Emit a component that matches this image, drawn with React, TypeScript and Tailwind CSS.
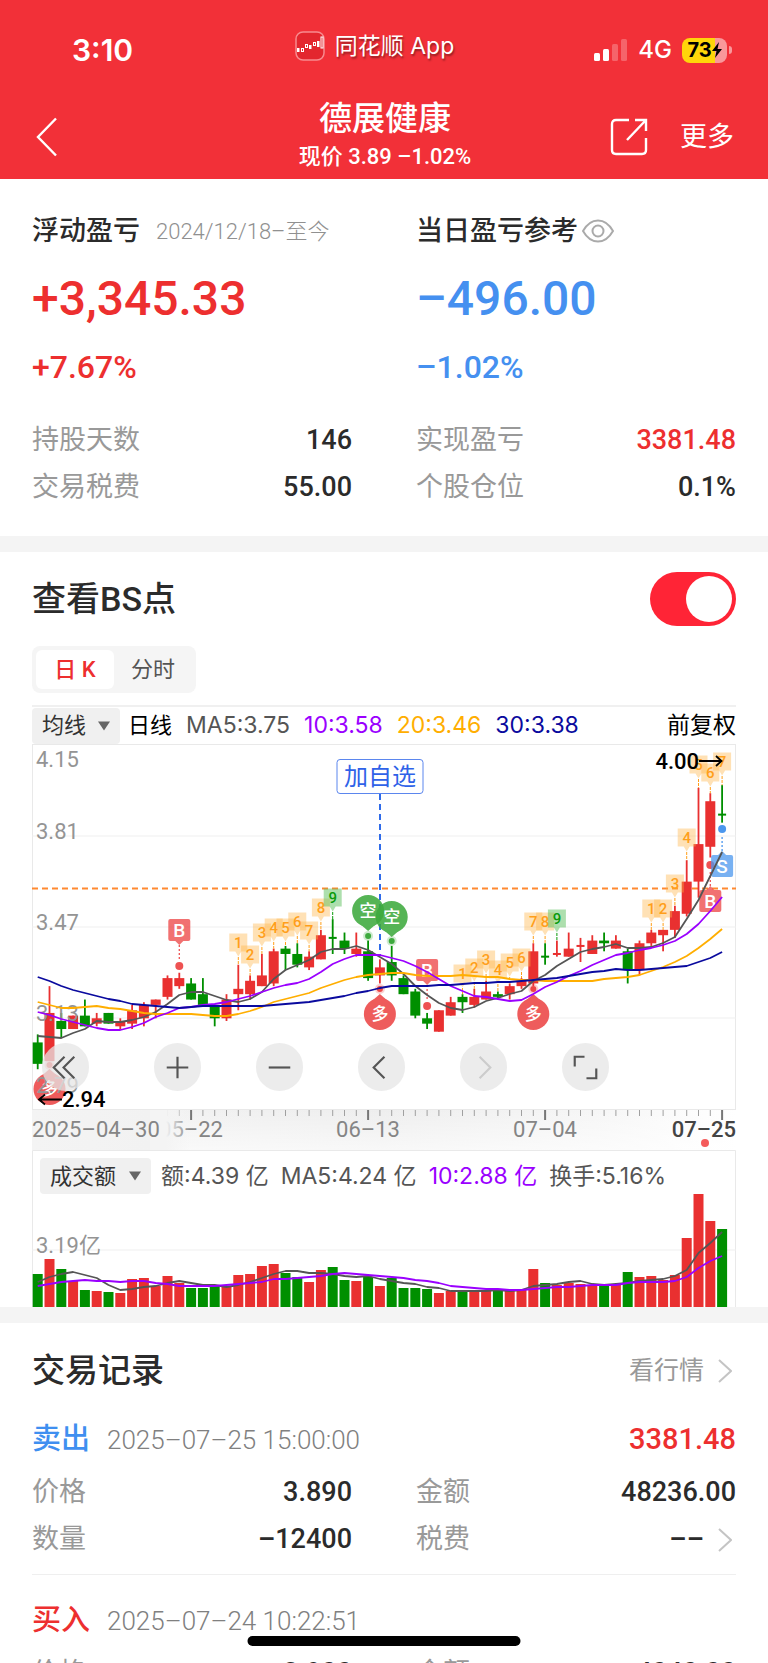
import React, { useState } from 'react';

type Candle = [dir: 'r' | 'g', high: number, top: number, bottom: number, low: number, vol: number];

const RED = '#e93030';
const GREEN = '#008f00';
const STEP = 11.8;

const candles: Candle[] = [
  ['g', 3.07, 3.04, 2.96, 2.94, 33],
  ['r', 3.25, 3.15, 2.97, 2.97, 48],
  ['g', 3.15, 3.12, 3.09, 3.06, 38],
  ['r', 3.14, 3.14, 3.09, 3.09, 26],
  ['g', 3.2, 3.14, 3.1, 3.1, 17],
  ['r', 3.15, 3.13, 3.11, 3.1, 16],
  ['g', 3.15, 3.15, 3.11, 3.11, 15],
  ['r', 3.13, 3.12, 3.1, 3.09, 14],
  ['r', 3.18, 3.16, 3.11, 3.09, 28],
  ['r', 3.19, 3.18, 3.13, 3.1, 29],
  ['r', 3.2, 3.2, 3.18, 3.13, 21],
  ['r', 3.29, 3.28, 3.21, 3.2, 31],
  ['r', 3.3, 3.28, 3.25, 3.24, 24],
  ['g', 3.28, 3.26, 3.2, 3.2, 19],
  ['g', 3.28, 3.22, 3.18, 3.18, 19],
  ['g', 3.18, 3.18, 3.13, 3.1, 21],
  ['r', 3.22, 3.2, 3.13, 3.12, 21],
  ['r', 3.33, 3.24, 3.22, 3.16, 32],
  ['r', 3.29, 3.27, 3.22, 3.2, 33],
  ['r', 3.37, 3.29, 3.25, 3.25, 41],
  ['r', 3.39, 3.38, 3.26, 3.25, 43],
  ['g', 3.4, 3.39, 3.37, 3.31, 34],
  ['g', 3.41, 3.37, 3.33, 3.32, 30],
  ['r', 3.38, 3.36, 3.32, 3.31, 25],
  ['r', 3.46, 3.44, 3.35, 3.35, 37],
  ['g', 3.5, 3.43, 3.43, 3.37, 40],
  ['g', 3.45, 3.42, 3.39, 3.37, 27],
  ['r', 3.45, 3.39, 3.37, 3.36, 26],
  ['g', 3.42, 3.38, 3.28, 3.27, 30],
  ['r', 3.35, 3.32, 3.29, 3.26, 21],
  ['g', 3.4, 3.34, 3.29, 3.27, 29],
  ['g', 3.29, 3.28, 3.22, 3.22, 19],
  ['g', 3.24, 3.23, 3.14, 3.13, 19],
  ['g', 3.15, 3.13, 3.11, 3.09, 18],
  ['r', 3.16, 3.16, 3.08, 3.08, 14],
  ['r', 3.21, 3.19, 3.14, 3.14, 16],
  ['g', 3.22, 3.21, 3.19, 3.15, 17],
  ['r', 3.24, 3.21, 3.18, 3.17, 17],
  ['r', 3.27, 3.23, 3.2, 3.2, 17],
  ['g', 3.23, 3.22, 3.21, 3.2, 16],
  ['r', 3.26, 3.25, 3.22, 3.2, 16],
  ['r', 3.28, 3.27, 3.25, 3.24, 18],
  ['r', 3.41, 3.38, 3.26, 3.25, 38],
  ['g', 3.41, 3.36, 3.36, 3.33, 24],
  ['r', 3.42, 3.37, 3.37, 3.36, 22],
  ['r', 3.45, 3.39, 3.36, 3.36, 24],
  ['r', 3.43, 3.4, 3.4, 3.34, 23],
  ['r', 3.44, 3.42, 3.37, 3.37, 21],
  ['g', 3.45, 3.42, 3.41, 3.38, 22],
  ['r', 3.44, 3.42, 3.39, 3.39, 22],
  ['g', 3.39, 3.38, 3.31, 3.26, 35],
  ['r', 3.42, 3.41, 3.31, 3.29, 30],
  ['r', 3.46, 3.45, 3.41, 3.4, 31],
  ['r', 3.46, 3.46, 3.44, 3.38, 27],
  ['r', 3.55, 3.53, 3.46, 3.43, 32],
  ['r', 3.72, 3.64, 3.52, 3.51, 69],
  ['r', 3.99, 3.78, 3.64, 3.58, 113],
  ['r', 3.97, 3.94, 3.77, 3.73, 86],
  ['g', 4.0, 3.89, 3.89, 3.86, 78],
];

const priceLines = [
  { color: '#555555', ys: [292,293,294,289,285,277,278,278,276,273,268,260,251,248,248,252,256,258,255,248,235,226,221,216,208,205,205,202,206,213,220,230,242,251,259,264,266,263,257,254,250,247,237,231,222,215,208,205,203,200,204,204,203,199,193,175,156,132,108] },
  { color: '#ffae00', ys: [258,261,264,264,263,262,264,265,267,269,270,270,270,270,271,272,272,270,267,263,258,255,252,249,244,240,236,233,231,230,229,229,231,232,232,232,231,232,233,233,235,236,236,237,237,237,237,237,235,234,233,231,227,223,218,212,204,195,185] },
  { color: '#9a00ff', ys: [268,271,275,278,281,284,286,286,283,279,273,269,264,263,261,260,258,255,252,248,244,241,239,235,228,220,215,211,211,211,214,217,222,228,235,242,247,252,253,255,257,256,250,243,238,232,227,221,216,211,209,206,204,201,197,190,180,167,153] },
  { color: '#0a0a9e', ys: [233,237,242,246,249,252,255,257,260,261,262,263,264,263,262,262,262,262,262,262,261,260,259,258,256,254,252,249,247,244,242,242,242,242,241,241,240,239,239,238,238,237,236,235,234,232,230,228,227,225,226,226,225,224,223,222,218,214,208] },
];

const volumeLines = [
  { color: '#555555', ys: [132,127,124,122,125,128,135,140,139,137,136,133,131,133,135,135,137,135,132,128,124,121,121,123,123,124,126,127,126,129,131,133,134,137,138,141,141,141,141,140,141,140,136,135,134,132,131,134,135,134,133,131,130,129,126,120,103,93,82] },
  { color: '#9a00ff', ys: [136,134,132,131,130,131,131,132,131,131,133,134,136,136,136,136,135,134,133,132,129,129,128,127,126,124,123,124,125,126,127,128,130,131,133,136,137,138,139,139,140,140,139,138,137,137,136,135,135,135,133,132,132,132,131,127,118,111,106] },
];

// candle index, number, centre y
const countTags: [number, string, number][] = [
  [17, '1', 199], [18, '2', 211], [19, '3', 189], [20, '4', 184], [21, '5', 184],
  [22, '6', 178], [23, '7', 187], [24, '8', 164], [25, '9', 154],
  [36, '1', 230], [37, '2', 224], [38, '3', 216], [39, '4', 226], [40, '5', 219], [41, '6', 214],
  [42, '7', 178], [43, '8', 178], [44, '9', 175],
  [52, '1', 165], [53, '2', 165], [54, '3', 140], [55, '4', 94], [56, '5', 21], [57, '6', 29], [58, '7', 18],
];

const xAt = (i: number) => 5.7 + i * STEP;
const yAt = (price: number) => 274.3 - (price - 3.13) * 268;
const toPoints = (ys: number[]) => ys.map((y, i) => `${xAt(i)},${y}`).join(' ');

const CountTag = ({ index, label, y }: { index: number; label: string; y: number }) => {
  const x = xAt(index);
  const nine = label === '9';
  const color = nine ? '#0a9a0a' : '#ff9f1a';
  return (
    <g>
      <line x1={x} x2={x} y1={y + 14} y2={yAt(candles[index][1])} stroke={color} strokeDasharray="3 1" />
      <path
        d={`M${x - 9} ${y - 9.5}h18v18h-6l-3 5-3-5h-6z`}
        fill={nine ? '#5cc05c' : '#ffb347'}
        fillOpacity={nine ? 0.5 : 0.4}
        strokeLinejoin="round"
      />
      <text x={x} y={y + 5} textAnchor="middle" fontSize="15" fontWeight="500" fill={color}>{label}</text>
    </g>
  );
};

const TradeMark = ({ index, label, y, dotY }: { index: number; label: string; y: number; dotY: number }) => {
  const x = xAt(index);
  const buy = label === 'B';
  const color = buy ? '#ee5252' : '#4b97ee';
  const below = dotY > y;
  const edge = below ? y + 11 : y - 11;
  const tip = below ? edge + 4 : edge - 4;
  return (
    <g>
      <line x1={x} x2={x} y1={tip} y2={below ? dotY - 7 : dotY + 7} stroke={color} strokeWidth="1.3" strokeDasharray="2 2" />
      <g opacity={buy ? 0.82 : 0.75}>
        <rect x={x - 11} y={y - 11} width="22" height="22" rx="2" fill={color} />
        <path d={`M${x - 4} ${edge}L${x} ${tip}L${x + 4} ${edge}z`} fill={color} />
      </g>
      <circle cx={x} cy={dotY} r="4" fill={color} />
      <text x={x} y={y + 7} textAnchor="middle" fontSize="19" fontWeight="500" fill="#ffffff">{label}</text>
    </g>
  );
};

const Pin = ({ index, label, y, dotY }: { index: number; label: string; y: number; dotY: number }) => {
  const x = xAt(index);
  const color = label === '空' ? '#3eaa3e' : '#ec4545';
  const side = dotY > y ? 1 : -1;
  return (
    <g>
      <circle cx={x} cy={dotY} r="5" fill={color} fillOpacity="0.25" />
      <circle cx={x} cy={dotY} r="3" fill={color} />
      <g opacity="0.88">
        <circle cx={x} cy={y} r="16" fill={color} />
        <path d={`M${x - 8} ${y + 13 * side}L${x} ${y + 20 * side}L${x + 8} ${y + 13 * side}z`} fill={color} />
      </g>
      <text x={x} y={y + 6} textAnchor="middle" fontSize="17" fontWeight="500" fill="#ffffff">{label}</text>
    </g>
  );
};

const PriceChart = () => (
  <svg viewBox="0 0 704 366" className="block w-full" role="img" aria-label="日K线">
    <rect x="0.5" y="0.5" width="703" height="365" fill="none" stroke="#e9e9e9" />
    {[92, 183, 274].map((y) => (
      <line key={y} x1="0" x2="704" y1={y} y2={y} stroke="#efefef" />
    ))}
    <line x1="0" x2="704" y1="144.5" y2="144.5" stroke="#ff8930" strokeWidth="2" strokeDasharray="6 4" />

    {candles.map(([dir, high, top, bottom, low], i) => {
      const color = dir === 'r' ? RED : GREEN;
      const height = Math.max(yAt(bottom) - yAt(top), 2);
      const wide = top === bottom ? 8 : 10;
      return (
        <g key={i} fill={color}>
          <rect x={xAt(i) - 0.9} y={yAt(high)} width="1.8" height={Math.max(yAt(low) - yAt(high), 1)} />
          <rect x={xAt(i) - wide / 2} y={yAt(top) - (top === bottom ? 1 : 0)} width={wide} height={height} />
        </g>
      );
    })}

    <g fontSize="22" fill="#949494">
      <text x="4" y="23">4.15</text>
      <text x="4" y="95">3.81</text>
      <text x="4" y="186">3.47</text>
      <text x="4" y="277">3.13</text>
    </g>

    {/* watch-list marker */}
    <line x1="348" x2="348" y1="50" y2="212" stroke="#2f6bea" strokeWidth="2" strokeDasharray="6 4" />
    <rect x="305" y="15.5" width="86" height="34" rx="3" fill="#ffffff" stroke="#5b86ee" />
    <text x="348" y="41" textAnchor="middle" fontSize="24" fill="#2f62e8">加自选</text>

    {countTags.map(([index, label, y]) => (
      <CountTag key={index} index={index} label={label} y={y} />
    ))}
    <TradeMark index={12} label="B" y={186} dotY={222} />
    <TradeMark index={33} label="B" y={226} dotY={262} />
    <TradeMark index={57} label="B" y={157} dotY={121} />
    <TradeMark index={58} label="S" y={122} dotY={85} />
    <Pin index={28} label="空" y={167} dotY={192} />
    <Pin index={30} label="空" y={173} dotY={197} />
    <Pin index={29} label="多" y={270} dotY={245} />
    <Pin index={42} label="多" y={270} dotY={245} />
    <Pin index={1} label="多" y={345} dotY={321} />

    {priceLines.map(({ color, ys }) => (
      <polyline key={color} points={toPoints(ys)} fill="none" stroke={color} strokeWidth="1.8" strokeLinejoin="round" />
    ))}

    <text x="4" y="349" fontSize="22" fill="#949494">2.79</text>
    <g fontSize="22" fontWeight="500" fill="#000000">
      <text x="667" y="25" textAnchor="end">4.00</text>
      <text x="30" y="363">2.94</text>
    </g>
    <path d="M667 17H689M684 12L689.500 17L684 22M30 355.500H7M13 350.500L7 355.500L13 360.500" fill="none" stroke="#000000" strokeWidth="1.8" />
  </svg>
);

const DateAxis = () => (
  <svg viewBox="0 0 704 40" className="block w-full" role="img" aria-label="日期">
    <defs>
      <linearGradient id="axisShade" x1="0" x2="1" y1="0" y2="0">
        <stop offset="0" stopColor="#f4f4f4" />
        <stop offset="0.5" stopColor="#eeeeee" />
        <stop offset="0.8" stopColor="#f6f6f6" />
        <stop offset="1" stopColor="#ffffff" />
      </linearGradient>
      <linearGradient id="axisDown" x1="0" x2="0" y1="0" y2="1">
        <stop offset="0" stopColor="#ffffff" stopOpacity="0" />
        <stop offset="1" stopColor="#ffffff" stopOpacity="0.6" />
      </linearGradient>
      <linearGradient id="axisFade" x1="0" x2="1" y1="0" y2="0">
        <stop offset="0" stopColor="#f4f4f4" />
        <stop offset="0.4" stopColor="#f4f4f4" />
        <stop offset="1" stopColor="#f4f4f4" stopOpacity="0" />
      </linearGradient>
    </defs>
    <rect width="704" height="40" fill="url(#axisShade)" />
    <rect x="118" width="586" height="40" fill="url(#axisDown)" />
    {candles.slice(11).map((_, i) => {
      const major = (i + 11) % 15 === 13;
      return (
        <rect key={i} x={xAt(i + 11) - (major ? 1 : 0.5)} y="0" width={major ? 2 : 1} height={major ? 10 : 6} fill={major ? '#777777' : '#a0a0a0'} />
      );
    })}
    <g fontSize="22" fill="#858585">
      <text x="159" y="27" textAnchor="middle">05–22</text>
      <text x="336" y="27" textAnchor="middle">06–13</text>
      <text x="513" y="27" textAnchor="middle">07–04</text>
      <text x="704" y="27" textAnchor="end" fontWeight="500" fill="#444444">07–25</text>
    </g>
    <rect x="118" y="0" width="40" height="40" fill="url(#axisFade)" />
    <text x="0" y="27" fontSize="22" fill="#858585">2025–04–30</text>
    <circle cx="673" cy="33" r="4" fill="#f45b5b" />
  </svg>
);

const VolumeChart = () => (
  <svg viewBox="0 0 704 157" className="block w-full" role="img" aria-label="成交额">
    <path d="M0.500 157V0.500H703.500V157" fill="none" stroke="#e9e9e9" />
    <line x1="0" x2="704" y1="100" y2="100" stroke="#efefef" />
    <text x="4" y="103" fontSize="22" fill="#949494">3.19亿</text>
    {candles.map(([dir, , , , , vol], i) => (
      <rect key={i} x={xAt(i) - 5} y={157 - vol} width="10" height={vol} fill={dir === 'r' ? RED : GREEN} />
    ))}
    {volumeLines.map(({ color, ys }) => (
      <polyline key={color} points={toPoints(ys)} fill="none" stroke={color} strokeWidth="1.8" strokeLinejoin="round" />
    ))}
  </svg>
);

const chartTools = [
  { label: '最早', d: 'M23 13L12 24L23 35M33 13L22 24L33 35', muted: false },
  { label: '放大', d: 'M24 13V35M13 24H35', muted: false },
  { label: '缩小', d: 'M13 24H35', muted: false },
  { label: '向左', d: 'M27 13L16 24L27 35', muted: false },
  { label: '向右', d: 'M20 13L31 24L20 35', muted: true },
  { label: '全屏', d: 'M13 23V13H23M25 35H35V25', muted: false },
];

const Picker = ({ label, option, className }: { label: string; option: string; className: string }) => (
  <div className="relative shrink-0">
    <select aria-label={label} className={`h-9 appearance-none rounded bg-[#f0f0f0] text-[22px] text-[#333] outline-none ${className}`}>
      <option>{option}</option>
    </select>
    <svg viewBox="0 0 12 10" className="pointer-events-none absolute right-2.5 top-1/2 h-2.5 w-3 -translate-y-1/2">
      <path d="M0 0.500H12L6 9.500Z" fill="#666666" />
    </svg>
  </div>
);

const Chevron = () => (
  <svg viewBox="0 0 14 24" className="mr-1 h-6 w-3.5" fill="none" stroke="#c4c4c4" strokeWidth="2">
    <path d="M1 1L13 12L1 23" />
  </svg>
);

const Field = ({ label, value, red, more }: { label: string; value: string; red?: boolean; more?: boolean }) => (
  <div className="flex h-[47px] items-center justify-between">
    <span className="text-[27px] text-[#999]">{label}</span>
    <span className={`flex items-center gap-3.5 text-[27px] font-medium ${red ? 'text-[#ed2f2f]' : 'text-[#2b2b2b]'}`}>
      {value}
      {more && <Chevron />}
    </span>
  </div>
);

interface RecordProps {
  kind: string;
  time: string;
  profit?: string;
  price: string;
  amount: string;
  count: string;
}

const TradeRecord: React.FC<RecordProps> = ({ kind, time, profit, price, amount, count }) => (
  <article className="border-b border-[#efefef] pb-[11px] pt-[23px]">
    <div className="flex h-[46px] items-center">
      <span className={`text-[29px] font-medium ${kind === '卖出' ? 'text-[#3f8ff0]' : 'text-[#ed2f2f]'}`}>{kind}</span>
      <time className="ml-[17px] text-[26px] font-light text-[#808080]">{time}</time>
      <span className="ml-auto text-[29px] font-medium text-[#ed2f2f]">{profit}</span>
    </div>
    <div className="mt-[6px] grid grid-cols-2 gap-x-16">
      <Field label="价格" value={price} />
      <Field label="金额" value={amount} />
      <Field label="数量" value={count} />
      <Field label="税费" value="––" more />
    </div>
  </article>
);

const App: React.FC = () => {
  const [showPoints, setShowPoints] = useState(true);
  const [tab, setTab] = useState('日 K');

  return (
    <div className="h-screen overflow-hidden bg-white font-['Roboto','Noto_Sans_CJK_SC',sans-serif] text-[#2b2b2b]">
      <header className="bg-[#f23038] pb-[5px] text-white">
        <div className="flex h-[100px] items-center justify-between pl-[72px] pr-[36px] font-['Inter','Noto_Sans_CJK_SC',sans-serif]">
          <span className="w-[125px] text-[30px] font-semibold">3:10</span>
          <div className="flex items-center gap-2.5 pb-2">
            <svg viewBox="0 0 30 30" className="h-[30px] w-[30px]">
              <rect x="1" y="1" width="28" height="28" rx="7" fill="#e3262e" stroke="#f88a8e" strokeWidth="1.5" />
              <g fill="#ffffff">
                <rect x="2" y="17" width="2.5" height="4" />
                <rect x="14" y="14" width="2.5" height="4" />
                <rect x="22" y="10" width="2.5" height="6" />
              </g>
              <g fill="none" stroke="#ffffff">
                <rect x="6.500" y="17.500" width="2" height="3" />
                <rect x="10.500" y="13.500" width="2" height="3" />
                <rect x="18.500" y="11.500" width="2" height="3" />
                <rect x="26" y="6" width="2" height="11" />
              </g>
            </svg>
            <span className="whitespace-nowrap text-[23px] [text-shadow:1px_2px_2px_rgba(0,0,0,0.4)]">同花顺 App</span>
          </div>
          <div className="flex w-[180px] items-center justify-end">
            <svg viewBox="0 0 34 22" className="h-[22px] w-[34px]" fill="#ffffff">
              <rect x="0" y="14" width="6" height="8" rx="1.500" />
              <rect x="9" y="10" width="6" height="12" rx="1.500" />
              <rect x="18" y="5" width="6" height="17" rx="1.500" fillOpacity="0.25" />
              <rect x="27" y="0" width="6" height="22" rx="1.500" fillOpacity="0.25" />
            </svg>
            <span className="ml-2.5 text-[24px] font-medium">4G</span>
            <div className="ml-2.5 flex h-[25px] w-[45px] items-center justify-center rounded-lg bg-[linear-gradient(90deg,#ffd60a_73%,#f9989b_73%)] text-[20px] font-bold text-black">
              73
              <svg viewBox="0 0 10 16" className="h-4 w-2.5"><path d="M7 0L0 9H4.500L3 16L10 7H5.500Z" fill="#000000" /></svg>
            </div>
            <span className="ml-0.5 h-2 w-[3px] rounded-r-full bg-[#f9989b]" />
          </div>
        </div>
        <div className="flex h-[74px] items-center justify-between pl-9 pr-[34px]">
          <button aria-label="返回" className="flex w-[180px]">
            <svg viewBox="0 0 22 40" className="h-10 w-[22px]" fill="none" stroke="#ffffff" strokeWidth="2.4">
              <path d="M20 1.500L2 20L20 38.500" />
            </svg>
          </button>
          <div className="flex flex-col items-center">
            <h1 className="text-[33px] font-medium leading-[40px]">德展健康</h1>
            <p className="whitespace-nowrap text-[22px] font-medium leading-[36px]">现价 3.89 –1.02%</p>
          </div>
          <div className="flex w-[180px] items-center justify-end gap-8">
            <button aria-label="分享">
              <svg viewBox="0 0 38 38" className="h-[38px] w-[38px]" fill="none" stroke="#ffffff" strokeWidth="2.4">
                <path d="M19 2H6Q2 2 2 6V32Q2 36 6 36H32Q36 36 36 32V20" />
                <path d="M25 2H36V13M36 2L17 22" />
              </svg>
            </button>
            <button className="whitespace-nowrap text-[27px]">更多</button>
          </div>
        </div>
      </header>

      <main>
        <section className="px-8 pb-[25px] pt-8">
          <div className="grid grid-cols-2 gap-x-16">
            <div>
              <div className="flex h-10 items-center gap-4 whitespace-nowrap">
                <h2 className="text-[27px] font-medium">浮动盈亏</h2>
                <span className="text-[22px] font-light text-[#909090]">2024/12/18–至今</span>
              </div>
              <p className="mt-4 text-[48px] font-medium leading-[64px] text-[#ed2f2f]">+3,345.33</p>
              <p className="mt-3 text-[32px] font-medium leading-[48px] text-[#ed2f2f]">+7.67%</p>
            </div>
            <div>
              <div className="flex h-10 items-center gap-1 whitespace-nowrap">
                <h2 className="text-[27px] font-medium">当日盈亏参考</h2>
                <button aria-label="显示盈亏">
                  <svg viewBox="0 0 32 24" className="h-6 w-8" fill="none" stroke="#aaaaaa" strokeWidth="2">
                    <path d="M1 12Q7 1.500 16 1.500T31 12Q25 22.500 16 22.500T1 12Z" />
                    <circle cx="16" cy="12" r="5.500" />
                  </svg>
                </button>
              </div>
              <p className="mt-4 text-[48px] font-medium leading-[64px] text-[#4590f0]">–496.00</p>
              <p className="mt-3 text-[32px] font-medium leading-[48px] text-[#4590f0]">–1.02%</p>
            </div>
          </div>
          <div className="mt-[26px] grid grid-cols-2 gap-x-16">
            <Field label="持股天数" value="146" />
            <Field label="实现盈亏" value="3381.48" red />
            <Field label="交易税费" value="55.00" />
            <Field label="个股仓位" value="0.1%" />
          </div>
        </section>

        <section className="border-t-[16px] border-[#f4f4f4] px-8 pt-5">
          <div className="flex items-center justify-between">
            <h2 className="text-[34px] font-medium">查看BS点</h2>
            <label className="cursor-pointer">
              <input
                type="checkbox"
                aria-label="查看BS点"
                className="peer sr-only"
                checked={showPoints}
                onChange={(e) => setShowPoints(e.target.checked)}
              />
              <span className="flex h-[54px] w-[86px] items-center rounded-full bg-gray-300 p-1 peer-checked:justify-end peer-checked:bg-[#ff2436]">
                <span className="h-[46px] w-[46px] rounded-full bg-white" />
              </span>
            </label>
          </div>

          <div className="mt-5 inline-flex rounded-lg bg-[#f5f5f5] p-1 align-top">
            {['日 K', '分时'].map((name) => (
              <button
                key={name}
                onClick={() => setTab(name)}
                className={`h-[39px] w-[78px] rounded-md text-[22px] ${tab === name ? 'bg-white font-medium text-[#ed2f2f]' : 'text-[#555]'}`}
              >
                {name}
              </button>
            ))}
          </div>

          <div className="mt-3 flex h-[39px] items-center whitespace-nowrap border-t-2 border-[#f0f0f0] font-['Inter','Noto_Sans_CJK_SC',sans-serif] text-[23px]">
            <Picker label="均线" option="均线" className="w-[88px] pl-2.5" />
            <span className="ml-2 text-[22px] text-black">日线</span>
            <span className="ml-3.5 text-[#555]">MA5:3.75</span>
            <span className="ml-3.5 text-[#9a00ff]">10:3.58</span>
            <span className="ml-3.5 text-[#ffae00]">20:3.46</span>
            <span className="ml-3.5 text-[#0a0a9e]">30:3.38</span>
            <span className="ml-auto text-black">前复权</span>
          </div>

          <div className="relative">
            <PriceChart />
            <div className="absolute bottom-[19px] left-2.5 flex gap-[55px]">
              {chartTools.map(({ label, d, muted }) => (
                <button key={label} aria-label={label} disabled={muted} className="h-12 w-[47px] rounded-full bg-[#e6e6e6]/75 first:mr-2.5">
                  <svg viewBox="0 0 48 48" className="w-full" fill="none" stroke={muted ? '#cccccc' : '#555555'} strokeWidth="2.2">
                    <path d={d} />
                  </svg>
                </button>
              ))}
            </div>
          </div>
          <DateAxis />
          <div className="relative">
            <VolumeChart />
            <div className="absolute left-2 top-2 flex items-center whitespace-nowrap font-['Inter','Noto_Sans_CJK_SC',sans-serif] text-[23px] text-[#555]">
              <Picker label="成交额" option="成交额" className="w-[111px] pl-2.5" />
              <span className="ml-2.5">额:4.39 亿</span>
              <span className="ml-3">MA5:4.24 亿</span>
              <span className="ml-3 text-[#9a00ff]">10:2.88 亿</span>
              <span className="ml-3">换手:5.16%</span>
            </div>
          </div>
        </section>

        <section className="border-t-[16px] border-[#f4f4f4] px-8 pt-[25px]">
          <div className="flex h-[46px] items-center justify-between">
            <h2 className="text-[33px] font-medium">交易记录</h2>
            <a href="#quote" className="flex items-center gap-3.5 text-[25px] text-[#999]">
              看行情
              <Chevron />
            </a>
          </div>
          <TradeRecord kind="卖出" time="2025–07–25 15:00:00" profit="3381.48" price="3.890" amount="48236.00" count="–12400" />
          <TradeRecord kind="买入" time="2025–07–24 10:22:51" price="3.900" amount="4040.00" count="1000" />
        </section>
      </main>

      <div className="fixed bottom-[17px] left-1/2 h-2.5 w-[273px] -translate-x-1/2 rounded-full bg-black" />
    </div>
  );
};

export default App;
